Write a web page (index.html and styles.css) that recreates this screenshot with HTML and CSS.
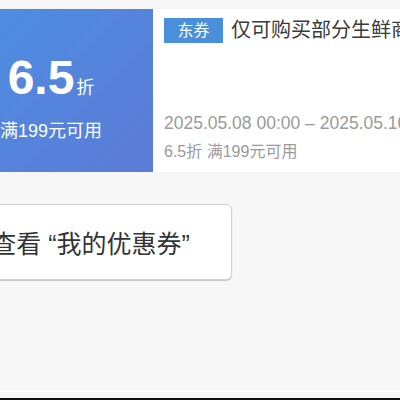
FILE: index.html
```html
<!DOCTYPE html>
<html lang="zh-CN">
<head>
<meta charset="utf-8">
<title>优惠券</title>
<link rel="stylesheet" href="styles.css">
</head>
<body>
<main class="page">
  <section class="coupon">
    <div class="coupon-left">
      <div class="amount">6.5<span class="unit">折</span></div>
      <div class="condition">满199元可用</div>
    </div>
    <div class="coupon-right">
      <div class="title-row">
        <span class="tag">东券</span>
        <span class="title">仅可购买部分生鲜商品可用</span>
      </div>
      <div class="date">2025.05.08 00:00 – 2025.05.10 23:59</div>
      <div class="desc">6.5折 满199元可用</div>
    </div>
  </section>
  <div class="actions">
    <button class="view-btn">查看 “我的优惠券”</button>
  </div>
</main>
<footer class="bottom">
  <div class="bottom-line"></div>
  <div class="bottom-bar"></div>
</footer>
</body>
</html>
```
FILE: styles.css
```css
html, body {
  margin: 0;
  padding: 0;
  height: 100%;
}
body {
  background: #f7f7f7;
  font-family: "Liberation Sans", "Noto Sans CJK SC", sans-serif;
  display: flex;
  flex-direction: column;
  overflow: hidden;
}
.page {
  margin-left: -51px;
  padding-top: 9px;
}
.coupon {
  display: flex;
  height: 163px;
  background: #fff;
}
.coupon-left {
  width: 204px;
  flex: none;
  background: linear-gradient(135deg, #4a90e0 0%, #5584dc 55%, #5b7bd6 100%);
  color: #fff;
  display: flex;
  flex-direction: column;
  align-items: center;
  padding-top: 45px;
  box-sizing: border-box;
}
.amount {
  font-size: 48px;
  font-weight: bold;
  line-height: 48px;
  white-space: nowrap;
}
.unit {
  font-size: 18px;
  font-weight: normal;
  line-height: 1;
  margin-left: 2px;
}
.condition {
  margin-top: 17px;
  font-size: 18px;
  line-height: 24px;
  white-space: nowrap;
}
.coupon-right {
  flex: 1;
  min-width: 0;
  overflow: hidden;
  padding: 8px 0 9px 11px;
  display: flex;
  flex-direction: column;
}
.title-row {
  display: flex;
  align-items: center;
  gap: 8px;
  white-space: nowrap;
}
.tag {
  flex: none;
  width: 59px;
  height: 25px;
  line-height: 25px;
  text-align: center;
  background: #4a8fdc;
  color: #fff;
  font-size: 16px;
}
.title {
  font-size: 20px;
  color: #3a3a3a;
  line-height: 26px;
}
.date {
  margin-top: auto;
  font-size: 17.5px;
  line-height: 22px;
  color: #9a9a9a;
  white-space: nowrap;
}
.desc {
  margin-top: 7px;
  font-size: 16px;
  line-height: 22px;
  color: #9a9a9a;
  white-space: nowrap;
}
.actions {
  margin-top: 32px;
}
.view-btn {
  width: 283px;
  height: 76px;
  background: #fff;
  border: 1px solid #d2d2d2;
  border-radius: 6px;
  box-shadow: 0 1px 1px #c4c4c4;
  font-family: "Liberation Sans", "Noto Sans CJK SC", sans-serif;
  font-size: 25px;
  color: #333;
  padding: 0;
  white-space: nowrap;
}
.bottom {
  margin-top: auto;
}
.bottom-line {
  height: 1px;
  background: #fcfcfc;
  margin-bottom: 6px;
}
.bottom-bar {
  height: 2px;
  background: #111;
}
```
